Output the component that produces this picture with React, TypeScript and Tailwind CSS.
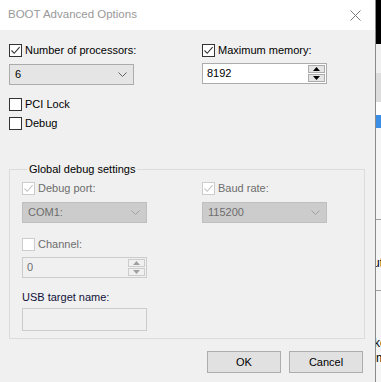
import React from "react";

const FONT = { fontFamily: '"Liberation Sans", Arial, sans-serif' };

function CheckBox({ checked, disabled }: { checked?: boolean; disabled?: boolean }) {
  const border = disabled ? "border-[#cccccc]" : "border-[#333333]";
  const stroke = disabled ? "#c4c4c4" : "#333333";
  return (
    <span className={`flex h-[13px] w-[13px] shrink-0 items-center justify-center border bg-white ${border}`}>
      {checked && (
        <svg width="11" height="11" viewBox="0 0 11 11">
          <path d="M1.5 5.5 L4.2 8.3 L9.6 2.2" fill="none" stroke={stroke} strokeWidth="1.1" />
        </svg>
      )}
    </span>
  );
}

function CheckRow({ label, checked, disabled }: { label: string; checked?: boolean; disabled?: boolean }) {
  return (
    <div className="flex h-[13px] items-center gap-[3px]">
      <CheckBox checked={checked} disabled={disabled} />
      <span className={`whitespace-nowrap leading-[13px] ${disabled ? "text-[#6d6d6d]" : "text-[#000000]"}`}>{label}</span>
    </div>
  );
}

function Chevron({ color }: { color: string }) {
  return (
    <svg width="9" height="5" viewBox="0 0 9 5">
      <path d="M0.5 0.5 L4.5 4.5 L8.5 0.5" fill="none" stroke={color} strokeWidth="1" />
    </svg>
  );
}

function Select({ value, disabled }: { value: string; disabled?: boolean }) {
  return (
    <div
      className={`flex h-[21px] w-[125px] items-center justify-between border pl-[5px] pr-[6px] ${
        disabled ? "border-[#bfbfbf] bg-[#cccccc] text-[#6d6d6d]" : "border-[#acacac] bg-[#e5e5e5] text-black"
      }`}
    >
      <span>{value}</span>
      <Chevron color={disabled ? "#a0a0a0" : "#606060"} />
    </div>
  );
}

function Arrow({ up, color }: { up?: boolean; color: string }) {
  return (
    <svg width="7" height="4" viewBox="0 0 7 4">
      <path d={up ? "M0 4 L3.5 0 L7 4 Z" : "M0 0 L7 0 L3.5 4 Z"} fill={color} />
    </svg>
  );
}

function Spin({ value, disabled }: { value: string; disabled?: boolean }) {
  const arrow = disabled ? "#a0a0a0" : "#000000";
  return (
    <div
      className={`flex h-[21px] w-[125px] items-stretch border ${
        disabled ? "border-[#cccccc] bg-[#f0f0f0] text-[#6d6d6d]" : "border-[#acacac] bg-white text-black"
      }`}
    >
      <span className="flex flex-1 items-center pl-[4px]">{value}</span>
      <div className="flex w-[18px] flex-col justify-between py-[1px] pr-[1px]">
        <div className={`flex h-[8px] items-center justify-center border ${disabled ? "border-[#cccccc] bg-[#f0f0f0]" : "border-[#acacac] bg-[#e5e5e5]"}`}>
          <Arrow up color={arrow} />
        </div>
        <div className={`flex h-[8px] items-center justify-center border ${disabled ? "border-[#cccccc] bg-[#f0f0f0]" : "border-[#acacac] bg-[#e5e5e5]"}`}>
          <Arrow color={arrow} />
        </div>
      </div>
    </div>
  );
}

function Button({ label }: { label: string }) {
  return (
    <div className="flex h-[22px] w-[74px] items-center justify-center border border-[#adadad] bg-[#e1e1e1] text-black">
      {label}
    </div>
  );
}

export default function App() {
  return (
    <div className="flex h-[382px] w-[381px] overflow-hidden text-[11px]" style={FONT}>
      <div className="flex w-[375px] shrink-0 flex-col bg-[#f0f0f0]">
        <div className="flex h-[30px] items-center justify-between bg-white pl-[8px] pr-[14px]">
          <span className="text-[11.5px] text-[#999999]">BOOT Advanced Options</span>
          <svg width="11" height="11" viewBox="0 0 11 11">
            <path d="M0.5 0.5 L10.5 10.5 M10.5 0.5 L0.5 10.5" stroke="#7a7a7a" strokeWidth="1" />
          </svg>
        </div>

        <div className="flex flex-col pl-[9px] pr-[11px] pt-[14px]">
          <div className="flex">
            <div className="flex w-[193px] flex-col">
              <CheckRow label="Number of processors:" checked />
              <div className="mt-[7px]">
                <Select value="6" />
              </div>
              <div className="mt-[13px]">
                <CheckRow label="PCI Lock" />
              </div>
              <div className="mt-[6px]">
                <CheckRow label="Debug" />
              </div>
            </div>
            <div className="flex flex-col">
              <CheckRow label="Maximum memory:" checked />
              <div className="mt-[6px]">
                <Spin value="8192" />
              </div>
            </div>
          </div>

          <fieldset className="mt-[32px] w-[356px] border border-[#dcdcdc] pb-[7px] pl-[12px]">
            <legend className="ml-[5px] px-[2px] leading-[15px] text-black">Global debug settings</legend>
            <div className="mt-[5px] flex">
              <div className="flex w-[180px] flex-col">
                <CheckRow label="Debug port:" checked disabled />
                <div className="mt-[7px]">
                  <Select value="COM1:" disabled />
                </div>
                <div className="mt-[15px]">
                  <CheckRow label="Channel:" disabled />
                </div>
                <div className="mt-[6px]">
                  <Spin value="0" disabled />
                </div>
                <span className="mt-[12px] leading-[14px] text-[#10103a]">USB target name:</span>
                <div className="mt-[4px] h-[23px] w-[125px] border border-[#cccccc] bg-[#f0f0f0]" />
              </div>
              <div className="flex flex-col">
                <CheckRow label="Baud rate:" checked disabled />
                <div className="mt-[7px]">
                  <Select value="115200" disabled />
                </div>
              </div>
            </div>
          </fieldset>

          <div className="mt-[12px] flex justify-end gap-[8px] pr-[1px]">
            <Button label="OK" />
            <Button label="Cancel" />
          </div>
        </div>
      </div>

      <div className="w-px shrink-0 bg-[#8c8c8c]" />

      <div className="flex w-[5px] shrink-0 flex-col overflow-hidden bg-[#f5f5f5] text-[12px] text-black">
        <div className="h-[44px] shrink-0 bg-black" />
        <div className="h-[29px] shrink-0 bg-[#f0f0f0]" />
        <div className="h-[29px] shrink-0 bg-[#dddddd]" />
        <div className="h-[13px] shrink-0 bg-white" />
        <div className="h-[13px] shrink-0 bg-[#3a8ee6]" />
        <div className="h-[91px] shrink-0 bg-[#f5f5f5]" />
        <div className="h-px shrink-0 bg-[#a0a0a0]" />
        <div className="h-[70px] shrink-0 pt-[36px] leading-[14px]">
          <span className="-ml-[3px] block">ut</span>
        </div>
        <div className="h-px shrink-0 bg-[#a0a0a0]" />
        <div className="pt-[45px] leading-[15px]">
          <span className="-ml-[2px] block">ke</span>
          <span className="block">m</span>
        </div>
      </div>
    </div>
  );
}
